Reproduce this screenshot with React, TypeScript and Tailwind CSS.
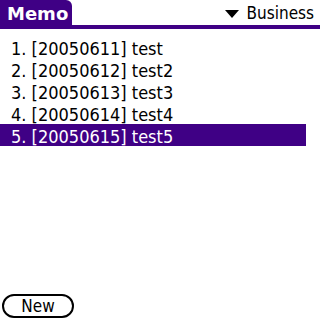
export default function App() {
  const memos = [
    '[20050611] test',
    '[20050612] test2',
    '[20050613] test3',
    '[20050614] test4',
    '[20050615] test5',
  ];
  const selected = 4;

  return (
    <div className="relative flex h-[320px] w-[320px] flex-col overflow-hidden bg-white font-['DejaVu_Sans_Condensed','DejaVu_Sans',sans-serif] text-black">
      {/* Title bar */}
      <div className="flex h-[29px] items-start border-b-[4px] border-[#3f0085]">
        <div className="flex h-[25px] w-[72px] items-center rounded-tr-[6px] bg-[#3f0085] pl-[7px] pt-[2px] font-['DejaVu_Sans',sans-serif] text-[18px] font-bold leading-none text-white">
          Memo
        </div>
        <div className="ml-auto flex h-[25px] items-center gap-[8px] pr-[6px] pt-[2px] text-[17px] leading-none">
          <svg width="14" height="8" viewBox="0 0 14 8">
            <polygon points="0,0 14,0 7,8" fill="black" />
          </svg>
          <span>Business</span>
        </div>
      </div>

      {/* Memo list */}
      <div className="mt-[7px] flex w-[306px] flex-col">
        {memos.map((m, i) => (
          <div
            key={i}
            className={`flex h-[22px] items-center pl-[11px] pt-[3px] text-[18px] leading-none ${
              i === selected ? 'bg-[#3f0085] text-white' : ''
            }`}
          >
            {i + 1}. {m}
          </div>
        ))}
      </div>

      {/* Bottom buttons */}
      <div className="mt-auto pb-[2px] pl-[2px]">
        <button className="flex h-[24px] w-[72px] items-center justify-center rounded-full border-2 border-black pt-[1px] text-[17px] leading-none">
          New
        </button>
      </div>
    </div>
  );
}
